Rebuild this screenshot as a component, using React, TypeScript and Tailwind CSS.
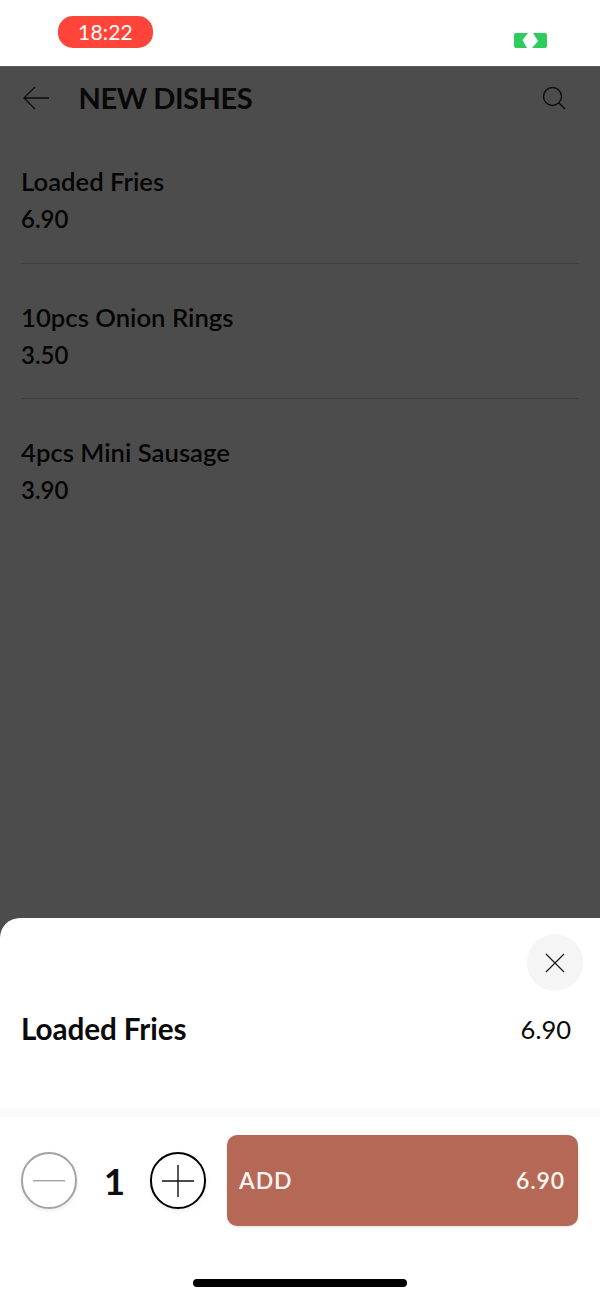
const dishes = [
  { name: 'Loaded Fries', price: '6.90' },
  { name: '10pcs Onion Rings', price: '3.50' },
  { name: '4pcs Mini Sausage', price: '3.90' },
]

function StatusBar() {
  return (
    <div className="h-[66px] bg-white flex items-start justify-between pl-[58px] pr-[53px] shrink-0">
      <div className="mt-[16px] w-[95px] h-[32px] rounded-[15px] bg-[#ff453a] text-white text-[21px] leading-[32px] text-center tracking-[0.2px]">18:22</div>
      <svg className="mt-[33px]" width="33" height="15" viewBox="0 0 33 15">
        <path fill="#2ecc5f" d="M2 0H14L8.5 7L13 15H2Q0 15 0 13V2Q0 0 2 0Z" />
        <path fill="#2ecc5f" d="M19 0H31Q33 0 33 2V13Q33 15 31 15H18L24 8Z" />
      </svg>
    </div>
  )
}

function DishRow({ name, price, last }: { name: string; price: string; last: boolean }) {
  return (
    <div className={`h-[135.5px] pt-[37px] mr-[21px] ${last ? '' : 'border-b border-[#3f3f3f]'}`}>
      <div className="text-[25.7px] leading-[32px] font-semibold text-[#050505]">{name}</div>
      <div className="mt-[6px] text-[24px] leading-[32px] font-semibold text-[#050505]">{price}</div>
    </div>
  )
}

function Sheet() {
  return (
    <div className="h-[380px] bg-white rounded-tl-[20px] shrink-0 flex flex-col">
      <div className="flex justify-end pt-[16px] pr-[17px]">
        <button className="w-[56px] h-[57px] rounded-full bg-[#f5f5f5] flex items-center justify-center">
          <svg width="20" height="20" viewBox="0 0 20 20" fill="none" stroke="#1a1a1a" strokeWidth="1.2">
            <path d="M1 1L19 19M19 1L1 19" />
          </svg>
        </button>
      </div>
      <div className="flex items-center justify-between pl-[21px] pr-[29px] mt-[20px]">
        <div className="text-[29.7px] leading-[36px] font-bold text-[#0a0a0a] tracking-[-0.1px]">Loaded Fries</div>
        <div className="text-[25.5px] leading-[36px] text-[#0a0a0a]">6.90</div>
      </div>
      <div className="mt-[61px] h-[9px] bg-[#fafafa]" />
      <div className="flex items-center pl-[21px] pr-[22px] pt-[18px]">
        <button className="w-[56px] h-[57px] rounded-full border-2 border-[#a3a3a3] flex items-center justify-center shadow-[0_2px_4px_rgba(0,0,0,0.08)]">
          <svg width="32" height="2" viewBox="0 0 32 2">
            <rect width="32" height="1.4" fill="#a3a3a3" />
          </svg>
        </button>
        <div className="w-[73px] pl-[2px] text-center text-[37px] leading-[44px] font-bold text-[#0f0f0f]">1</div>
        <button className="w-[56px] h-[57px] rounded-full border-2 border-black flex items-center justify-center shadow-[0_2px_4px_rgba(0,0,0,0.08)]">
          <svg width="32" height="32" viewBox="0 0 32 32" fill="none" stroke="#111" strokeWidth="1.4">
            <path d="M16 0V32M0 16H32" />
          </svg>
        </button>
        <button className="ml-[21px] flex-1 h-[91px] rounded-[10px] bg-[#b66857] flex items-center justify-between pl-[12px] pr-[13px] text-[#fdf5f1] text-[23px] font-semibold tracking-[0.9px] shadow-[0_1px_3px_rgba(0,0,0,0.12)]">
          <span>ADD</span>
          <span>6.90</span>
        </button>
      </div>
      <div className="flex-1 flex items-end justify-center pb-[11px]">
        <div className="w-[214px] h-[8px] rounded-full bg-black" />
      </div>
    </div>
  )
}

export default function App() {
  return (
    <div className="w-[600px] h-[1298px] flex flex-col overflow-hidden bg-[#4c4c4c] font-['Lato','Liberation_Sans',sans-serif]">
      <StatusBar />
      <div className="flex-1 bg-[#4c4c4c] border-t border-[#5c5c5c]">
        <div className="h-[62px] flex items-center pl-[23px] pr-[34px]">
          <svg width="27" height="24" viewBox="0 0 27 24" fill="none" stroke="#0d0d0d" strokeWidth="1.3">
            <path d="M26 12H1M12 1L1 12L12 23" />
          </svg>
          <div className="ml-[28.5px] flex-1 text-[29px] leading-[36px] font-bold text-[#080808] tracking-[-0.4px]">NEW DISHES</div>
          <svg width="24" height="24" viewBox="0 0 24 24" fill="none" stroke="#0d0d0d" strokeWidth="1.4">
            <circle cx="10.5" cy="10.5" r="9" />
            <path d="M17 17L23 23" />
          </svg>
        </div>
        <div className="pl-[21px] mt-[-1px]">
          {dishes.map((d, i) => (
            <DishRow key={d.name} name={d.name} price={d.price} last={i === dishes.length - 1} />
          ))}
        </div>
      </div>
      <Sheet />
    </div>
  )
}
